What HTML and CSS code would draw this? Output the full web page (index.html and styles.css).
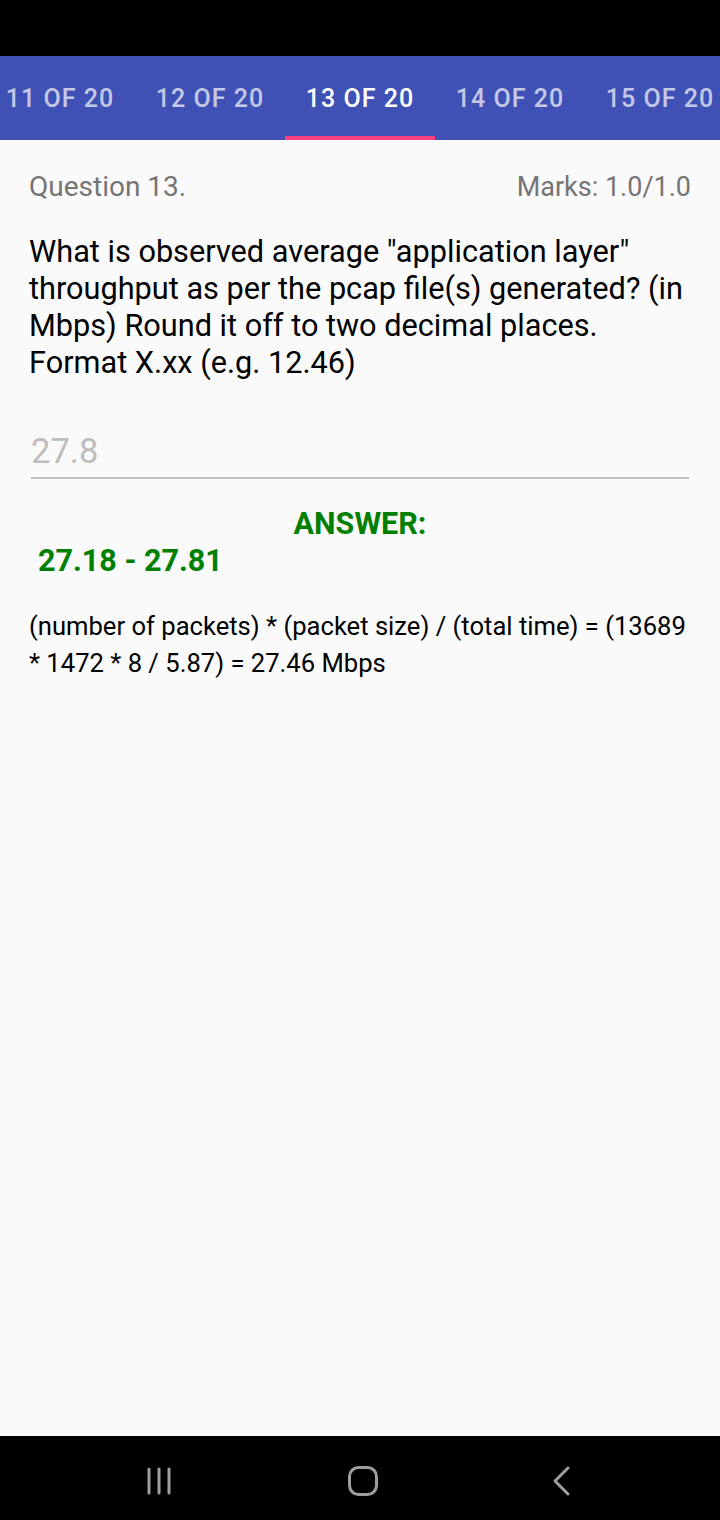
FILE: index.html
```html
<!DOCTYPE html>
<html>
<head>
<meta charset="utf-8">
<link rel="stylesheet" href="styles.css">
</head>
<body>
<div class="screen">
  <div class="statusbar"></div>
  <div class="tabs">
    <div class="tab">11 OF 20</div>
    <div class="tab">12 OF 20</div>
    <div class="tab active">13 OF 20</div>
    <div class="tab">14 OF 20</div>
    <div class="tab">15 OF 20</div>
  </div>
  <div class="content">
    <div class="qhead">
      <span class="qnum">Question 13.</span>
      <span class="marks">Marks: 1.0/1.0</span>
    </div>
    <div class="qtext">What is observed average "application layer" throughput as per the pcap file(s) generated? (in Mbps) Round it off to two decimal places. Format X.xx (e.g. 12.46)</div>
    <div class="input">27.8</div>
    <div class="answer-label">ANSWER:</div>
    <div class="answer-value">27.18 - 27.81</div>
    <div class="explain">(number of packets) * (packet size) / (total time) = (13689 * 1472 * 8 / 5.87) = 27.46 Mbps</div>
  </div>
  <div class="navbar">
    <svg width="30" height="30" viewBox="0 0 30 30"><g stroke="#9e9e9e" stroke-width="3" stroke-linecap="round"><line x1="4" y1="3" x2="4" y2="27"/><line x1="14" y1="3" x2="14" y2="27"/><line x1="24" y1="3" x2="24" y2="27"/></g></svg>
    <svg width="32" height="32" viewBox="0 0 32 32"><rect x="2.5" y="2.5" width="27" height="27" rx="9" fill="none" stroke="#9e9e9e" stroke-width="3"/></svg>
    <svg width="22" height="32" viewBox="0 0 22 32"><polyline points="17,3 4,16 17,29" fill="none" stroke="#9e9e9e" stroke-width="3" stroke-linecap="round" stroke-linejoin="round"/></svg>
  </div>
</div>
</body>
</html>
```
FILE: styles.css
```css
html, body {
  margin: 0;
  padding: 0;
}
body {
  font-family: Roboto, "Noto Sans", sans-serif;
  background: #fafafa;
}
.screen {
  width: 720px;
  height: 1520px;
  display: flex;
  flex-direction: column;
}
.statusbar {
  height: 56px;
  background: #000;
  flex: none;
}
.tabs {
  height: 84px;
  background: #3f51b5;
  display: flex;
  flex: none;
  margin-left: -15px;
}
.tab {
  width: 150px;
  flex: none;
  display: flex;
  align-items: center;
  justify-content: center;
  color: rgba(255,255,255,0.7);
  font-size: 25px;
  letter-spacing: 1px;
  font-weight: 500;
  box-sizing: border-box;
  border-bottom: 4px solid transparent;
  padding-top: 4px;
}
.tab.active {
  color: #fff;
  border-bottom-color: #ff4081;
}
.content {
  flex: 1;
  padding: 30px 29px 0 29px;
  display: flex;
  flex-direction: column;
}
.qhead {
  display: flex;
  justify-content: space-between;
  color: #757575;
  line-height: 34px;
}
.qnum {
  font-size: 28px;
}
.marks {
  font-size: 27px;
}
.qtext {
  margin-top: 29px;
  font-size: 30.7px;
  line-height: 37px;
  color: #000;
}
.input {
  margin: 48px 2px 0 2px;
  font-size: 34.5px;
  line-height: 44px;
  color: #bdbdbd;
  border-bottom: 2px solid #c0c0c0;
  padding: 0 0 4px 0;
}
.answer-label {
  margin-top: 26px;
  text-align: center;
  font-weight: 700;
  color: #008000;
  font-size: 30.5px;
  line-height: 37px;
}
.answer-value {
  padding-left: 9px;
  font-weight: 700;
  color: #008000;
  font-size: 30.5px;
  line-height: 37px;
}
.explain {
  margin-top: 29px;
  font-size: 25.6px;
  line-height: 37px;
  color: #000;
}
.navbar {
  height: 84px;
  background: #000;
  flex: none;
  display: flex;
  align-items: center;
  justify-content: space-between;
  padding: 6px 147px 0 145px;
  box-sizing: border-box;
}
```
